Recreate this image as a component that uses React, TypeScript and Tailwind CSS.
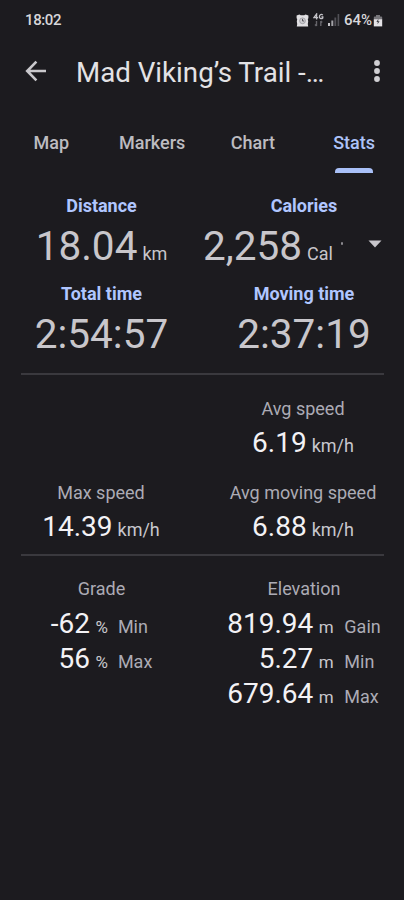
import clsx from "clsx";

type Stat = {
  label: string;
  value: string;
  unit?: string;
};

const tabs = ["Map", "Markers", "Chart", "Stats"];

const AlarmIcon = () => (
  <svg width="13" height="13" viewBox="0 0 13 13">
    <path d="M.6 1.4 3.4.6l1.4.6h3.4L9.6.6l2.8.8v2.8l-.6.8.4 2.6-.4 2.4.4 2.4H.8l.4-2.4-.4-2.4.4-2.6-.6-.8z" fill="#e0dfe2" />
    <circle cx="6.5" cy="6.8" r="2.9" fill="#cfced2" stroke="#8d8c92" strokeWidth="0.7" />
    <path d="M6.5 4.9v2.1h1.6" fill="none" stroke="#55545a" strokeWidth="1" />
  </svg>
);

const NetworkIcon = () => (
  <svg width="11" height="14" viewBox="0 0 11 14">
    <path d="M3.6 6.4V1L1 4.6h4.2M9.8 2.2C8.6.8 6.4 1.4 6.4 3.6s2.2 2.6 3.4 1.4V3.8H8.4" fill="none" stroke="#c4c3c8" strokeWidth="1.3" />
    <path d="M3.5 8v5M2 11.4 3.5 13M7.8 13V8M9.2 9.4 7.8 8" fill="none" stroke="#66656a" strokeWidth="1.4" />
  </svg>
);

const SignalIcon = () => (
  <svg width="12" height="12" viewBox="0 0 12 12">
    <path d="M0 9h2v3H0z" fill="#c9c8cc" />
    <path d="M3.3 6.5h2V12h-2z" fill="#a3a2a7" />
    <path d="M6.4 3.5h1.8V12H6.4zM9.6 0h1.6v12H9.6z" fill="#515056" />
  </svg>
);

const BatteryIcon = () => (
  <svg width="10" height="13" viewBox="0 0 10 13">
    <path d="M3 1h4v1.4h1.2q1 0 1 1V5.4H.8v-2q0-1 1-1H3z" fill="#77767b" />
    <path d="M.8 5.2h8.4v7.2H.8z" fill="#e4e3e6" />
    <path d="M5.4 4.8 3.4 8h1.4l-.3 2.2 2.1-3H5.2z" fill="#3c3b40" />
  </svg>
);

const StatusBar = () => (
  <div className="flex h-[40px] items-center justify-between pl-[25px] pr-[21px] text-[#d8d7da]">
    <span className="text-[15px] font-medium tracking-[-0.4px]">18:02</span>
    <div className="flex items-center">
      <AlarmIcon />
      <div className="ml-[4px]">
        <NetworkIcon />
      </div>
      <div className="ml-[4px]">
        <SignalIcon />
      </div>
      <span className="ml-[4px] mr-px text-[15px] font-medium">64%</span>
      <BatteryIcon />
    </div>
  </div>
);

const Toolbar = () => (
  <div className="flex h-[62px] items-center pl-[25px] pr-[22px]">
    <svg width="22" height="22" viewBox="0 0 22 22" fill="none" stroke="#c9c8cc" strokeWidth="2.6">
      <path d="M21 11H2.5M11.4 1.6 2.2 11l9.2 9.4" />
    </svg>
    <h1 className="ml-[29px] flex-1 whitespace-nowrap pt-[3px] text-[27.7px] leading-[36px] text-[#e3e2e5]">
      Mad Viking’s Trail -…
    </h1>
    <svg width="10" height="24" viewBox="0 0 10 24" fill="#d0cfd3">
      <circle cx="5" cy="4" r="2.9" />
      <circle cx="5" cy="12" r="2.9" />
      <circle cx="5" cy="20" r="2.9" />
    </svg>
  </div>
);

const TabBar = () => (
  <div className="grid h-[72px] grid-cols-4 pl-px">
    {tabs.map((tab) => (
      <div
        key={tab}
        className={clsx(
          "flex flex-col items-center pt-[29px] text-[18px] font-medium leading-[24px]",
          tab === "Stats" ? "pl-px text-[#adc3f8]" : "text-[#bdbcc0]"
        )}
      >
        {tab}
        {tab === "Stats" && <div className="mt-[13px] h-[5px] w-[38px] rounded-t-[4px] bg-[#a9c0f7]" />}
      </div>
    ))}
  </div>
);

const MainStat = ({ label, value, unit }: Stat) => (
  <div className="flex flex-col items-center">
    <div className="text-[18px] font-bold leading-[24px] text-[#b0c6ff]">{label}</div>
    <div className="mt-[4px] flex h-[48px] items-baseline whitespace-nowrap text-[40.5px] leading-[48px] text-[#c8c6cb]">
      {value}
      {unit && <span className="ml-[5px] text-[18px] leading-none">{unit}</span>}
    </div>
  </div>
);

const SpeedStat = ({ label, value, unit }: Stat) => (
  <div className="flex flex-col items-center">
    <div className="text-[18px] leading-[24px] text-[#acabb5]">{label}</div>
    <div className="mt-[5px] flex h-[34px] items-baseline whitespace-nowrap text-[28px] leading-[34px] text-[#f3f2f5]">
      {value}
      <span className="ml-[5px] text-[18px] leading-none text-[#c8c7cd]">{unit}</span>
    </div>
  </div>
);

const RangeRow = ({ label, value, unit }: Stat) => (
  <>
    <span className="text-right text-[28px] leading-[35px] text-[#f3f2f5]">{value}</span>
    <span className="text-[17px] leading-none text-[#c8c7cd]">{unit}</span>
    <span className="text-[18px] leading-none text-[#acabb5]">{label}</span>
  </>
);

const Divider = () => <div className="ml-[21px] mr-[20px] h-[2px] bg-[#3a393e]" />;

export default function App() {
  return (
    <div className="h-[900px] w-[404px] overflow-hidden bg-[#1c1b1f] font-['Roboto',sans-serif]">
      <StatusBar />
      <Toolbar />
      <TabBar />

      <div className="mt-[20px] grid grid-cols-[203px_202px] gap-y-[12px]">
        <MainStat label="Distance" value="18.04" unit="km" />
        <div className="relative">
          <div className="text-center text-[18px] font-bold leading-[24px] text-[#b0c6ff]">Calories</div>
          <div className="mt-[4px] flex h-[48px] items-baseline whitespace-nowrap text-[40.5px] leading-[48px] text-[#c8c6cb]">
            2,258<span className="ml-[5px] text-[18px] leading-none">Cal</span>
          </div>
          <div className="absolute left-[138px] top-[48px] h-[3px] w-[2px] rounded-full bg-[#8b8a8f]" />
          <svg className="absolute left-[165px] top-[46px]" width="14" height="8" viewBox="0 0 14 8">
            <path d="M.5.5h13L7 7.5z" fill="#c8c6cb" />
          </svg>
        </div>
        <MainStat label="Total time" value="2:54:57" />
        <MainStat label="Moving time" value="2:37:19" />
      </div>

      <div className="mt-[15px]">
        <Divider />
      </div>

      <div className="mt-[22px] grid grid-cols-[202px_202px] gap-y-[21px]">
        <div />
        <SpeedStat label="Avg speed" value="6.19" unit="km/h" />
        <SpeedStat label="Max speed" value="14.39" unit="km/h" />
        <SpeedStat label="Avg moving speed" value="6.88" unit="km/h" />
      </div>

      <div className="mt-[10px]">
        <Divider />
      </div>

      <div className="mt-[21px] grid grid-cols-[203px_202px]">
        <div className="flex flex-col items-center">
          <div className="text-[18px] leading-[24px] text-[#acabb5]">Grade</div>
          <div className="mt-[5px] grid grid-cols-[auto_17px_auto] items-baseline gap-x-[5.5px] whitespace-nowrap">
            <RangeRow label="Min" value="-62" unit="%" />
            <RangeRow label="Max" value="56" unit="%" />
          </div>
        </div>
        <div className="flex flex-col items-center">
          <div className="text-[18px] leading-[24px] text-[#acabb5]">Elevation</div>
          <div className="mt-[5px] grid grid-cols-[auto_20px_auto] items-baseline gap-x-[5.5px] whitespace-nowrap">
            <RangeRow label="Gain" value="819.94" unit="m" />
            <RangeRow label="Min" value="5.27" unit="m" />
            <RangeRow label="Max" value="679.64" unit="m" />
          </div>
        </div>
      </div>
    </div>
  );
}
